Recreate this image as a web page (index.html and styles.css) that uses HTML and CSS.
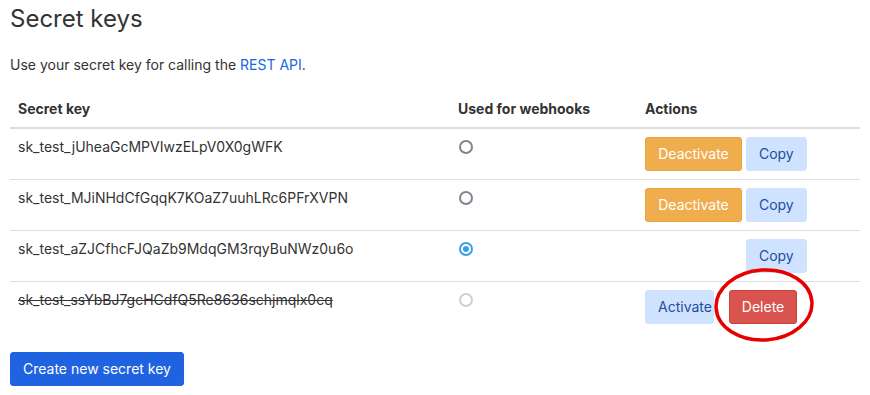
FILE: index.html
```html
<!DOCTYPE html>
<html>
    <head>
        <title>Secret keys</title>
        <meta name="viewport" content="width=device-width, initial-scale=1.0" />
        <link rel="stylesheet" href="styles.css">
    </head>
    <body>
        <h2>Secret keys</h2>
        <p class="intro">Use your secret key for calling the <a href="#">REST API</a>.</p>
        <table class="keys">
            <thead>
                <tr>
                    <th class="colKey">Secret key</th>
                    <th class="colHook">Used for webhooks</th>
                    <th class="colActions">Actions</th>
                </tr>
            </thead>
            <tbody>
                <tr>
                    <td>sk_test_jUheaGcMPVIwzELpV0X0gWFK</td>
                    <td><input type="radio" name="webhook" class="radio" /></td>
                    <td>
                        <button class="btn warning">Deactivate</button>
                        <button class="btn light">Copy</button>
                    </td>
                </tr>
                <tr>
                    <td>sk_test_MJiNHdCfGqqK7KOaZ7uuhLRc6PFrXVPN</td>
                    <td><input type="radio" name="webhook" class="radio" /></td>
                    <td>
                        <button class="btn warning">Deactivate</button>
                        <button class="btn light">Copy</button>
                    </td>
                </tr>
                <tr>
                    <td>sk_test_aZJCfhcFJQaZb9MdqGM3rqyBuNWz0u6o</td>
                    <td><input type="radio" name="webhook" class="radio" checked /></td>
                    <td>
                        <button class="btn warning hidden">Deactivate</button>
                        <button class="btn light">Copy</button>
                    </td>
                </tr>
                <tr class="inactive">
                    <td><s>sk_test_ssYbBJ7gcHCdfQ5Re8636schjmqlx0cq</s></td>
                    <td><input type="radio" name="webhook" class="radio" disabled /></td>
                    <td>
                        <button class="btn light activate">Activate</button>
                        <span class="marked">
                            <button class="btn danger">Delete</button>
                            <svg class="circle" width="104" height="78" viewBox="0 0 104 78">
                                <ellipse cx="52" cy="38" rx="48" ry="35" fill="none" stroke="#e60000" stroke-width="3.5" transform="rotate(-4 52 38)" />
                            </svg>
                        </span>
                    </td>
                </tr>
            </tbody>
        </table>
        <button class="btn primary create">Create new secret key</button>
    </body>
</html>
```

FILE: styles.css
```css
body {
    margin: 0;
    padding: 0 10px;
    background: #fff;
    font-family: Inter, "Noto Sans", sans-serif;
    font-size: 14px;
    color: #333;
}

h2 {
    margin: 4px 0 0;
    font-size: 24px;
    font-weight: 400;
    line-height: 30px;
    color: #333;
}

.intro {
    margin: 21px 0 16px;
    font-size: 14px;
    line-height: 20px;
}

.intro a {
    color: #1a66e0;
    text-decoration: none;
}

.keys {
    width: 850px;
    border-collapse: collapse;
}

.keys th {
    text-align: left;
    font-weight: 700;
    padding: 8px;
    line-height: 20px;
    border-bottom: 2px solid #ddd;
}

.colKey {
    width: 424px;
}

.colHook {
    width: 171px;
}

.keys td {
    padding: 8px;
    line-height: 20px;
    vertical-align: top;
    border-top: 1px solid #ddd;
}

.keys tbody tr:first-child td {
    border-top: none;
}

.inactive s {
    color: #333;
}

.radio {
    appearance: none;
    -webkit-appearance: none;
    width: 14px;
    height: 14px;
    margin: 3px 0 0 1px;
    border: 2px solid #858390;
    border-radius: 50%;
    background: #fff;
    box-sizing: border-box;
    position: relative;
}

.radio:checked {
    border-color: #3aa0e8;
}

.radio:checked:before {
    content: '';
    position: absolute;
    left: 2px;
    top: 2px;
    width: 6px;
    height: 6px;
    border-radius: 50%;
    background: #3aa0e8;
}

.radio:disabled {
    border-color: #cfcfd2;
}

.btn {
    font-family: Inter, "Noto Sans", sans-serif;
    font-size: 14px;
    line-height: 20px;
    padding: 6px 12px;
    border: 1px solid transparent;
    border-radius: 3px;
    cursor: pointer;
    vertical-align: top;
}

.warning {
    background: #f0ad4e;
    border-color: #eea236;
    color: #fff;
    width: 97px;
}

.light {
    background: #cfe2ff;
    border-color: #cfe2ff;
    color: #1b4f9c;
}

.activate {
    padding-right: 1px;
}

.danger {
    background: #d9534f;
    border-color: #c9413d;
    color: #fff;
}

.primary {
    background: #1f63e0;
    border-color: #1f63e0;
    color: #fff;
}

.hidden {
    visibility: hidden;
}

.marked {
    position: relative;
    display: inline-block;
    margin-left: 11px;
}

.circle {
    position: absolute;
    left: -17px;
    top: -23px;
}

.create {
    margin-top: 20px;
}
```
